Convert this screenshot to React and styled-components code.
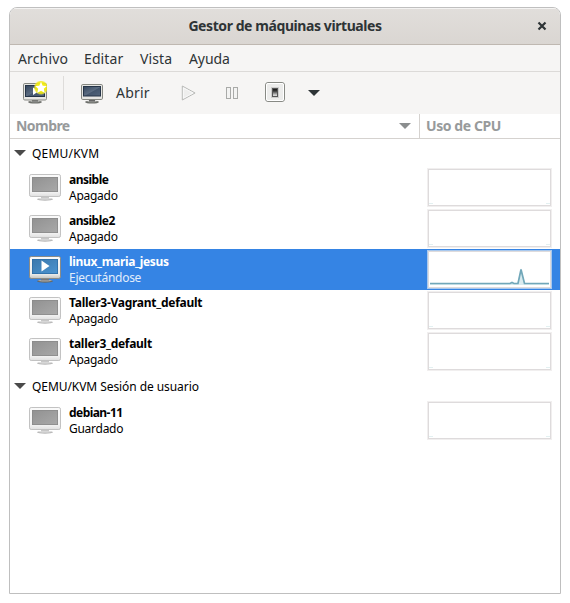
import React from "react";
import styled, { createGlobalStyle } from "styled-components";

const Global = createGlobalStyle`
  * { box-sizing: border-box; }
  body { margin: 0; background: #fff; }
`;

const Page = styled.div`
  height: 603px;
  padding: 7px 9px 9px;
  overflow: hidden;
  font-family: "Noto Sans", "Open Sans", sans-serif;
  color: #2e3436;
  white-space: nowrap;
`;

const Window = styled.div`
  width: 552px;
  height: 587px;
  display: flex;
  flex-direction: column;
  border: 1px solid #bfbfbf;
  border-radius: 8px 8px 0 0;
  background: #fff;
  overflow: hidden;
`;

const TitleBar = styled.header`
  height: 37px;
  flex: none;
  display: grid;
  grid-template-columns: 36px 1fr 36px;
  align-items: center;
  border-bottom: 1px solid #bfb8b1;
  background: linear-gradient(#e1dedb, #dad6d2);
  box-shadow: inset 0 1px #f4f3f2;
`;

const Title = styled.h1`
  grid-column: 2;
  margin: 0;
  text-align: center;
  font-size: 14px;
  line-height: 20px;
  font-weight: 700;
  letter-spacing: -0.42px;
`;

const CloseButton = styled.button`
  padding: 0;
  border: 0;
  background: none;
  height: 36px;
  display: flex;
  align-items: center;
  justify-content: center;
`;

const MenuBar = styled.nav`
  height: 27px;
  flex: none;
  display: flex;
  align-items: center;
  padding: 2px 0 0 8px;
  background: #f6f5f4;
  border-bottom: 1px solid #dcdad8;
`;

const MenuItem = styled.span`
  width: ${(p) => p.$width}px;
  font-size: 14px;
  line-height: 20px;
  letter-spacing: ${(p) => p.$track || 0}px;
`;

const Toolbar = styled.div`
  height: 42px;
  flex: none;
  display: flex;
  align-items: center;
  background: #f6f5f4;
`;

const Tool = styled.div`
  height: 42px;
  width: ${(p) => p.$width}px;
  display: flex;
  align-items: center;
  padding-left: ${(p) => p.$inset || 0}px;
  padding-bottom: ${(p) => p.$lift || 0}px;
  svg { flex: none; }
`;

const ToolLabel = styled.span`
  margin-left: 12px;
  font-size: 14px;
  line-height: 20px;
  letter-spacing: 0.2px;
`;

const Separator = styled.div`
  width: 1px;
  height: 34px;
  background: #dedcda;
`;

const ColumnHeads = styled.div`
  height: 25px;
  flex: none;
  display: grid;
  grid-template-columns: 410px 1fr;
  border-bottom: 1px solid #d5d2cf;
`;

const ColumnHead = styled.div`
  display: flex;
  align-items: center;
  justify-content: space-between;
  padding: 0 8px 0 6px;
  border-right: ${(p) => (p.$divided ? "1px solid #d5d2cf" : "0")};
  color: #979a9b;
  font-size: 14px;
  line-height: 20px;
  font-weight: 700;
  letter-spacing: ${(p) => p.$track || 0}px;
`;

const GroupRow = styled.div`
  height: 28px;
  flex: none;
  display: flex;
  align-items: center;
  padding: 2px 0 0 4px;
  gap: 6px;
  color: #000;
  font-size: 12px;
  line-height: 16px;
  letter-spacing: ${(p) => p.$track || 0}px;
  svg { margin-bottom: 2px; }
`;

const MachineRow = styled.div`
  height: 41px;
  flex: none;
  display: grid;
  grid-template-columns: 59px 1fr 133px;
  color: ${(p) => (p.$selected ? "#fff" : "#000")};
  background: ${(p) => (p.$selected ? "#3584e4" : "#fff")};
`;

const IconCell = styled.div`
  padding: 4px 0 0 19px;
  svg { display: block; }
`;

const Details = styled.div`
  padding-top: 5px;
  font-size: 12px;
  line-height: 16px;
`;

const MachineName = styled.div`
  font-weight: 700;
  letter-spacing: ${(p) => p.$track || 0}px;
`;

const MachineState = styled.div`
  letter-spacing: -0.27px;
  color: ${(p) => (p.$selected ? "#e1edfb" : "#000")};
`;

const Graph = styled.div`
  margin: 1px 0 0;
  width: 125px;
  height: 39px;
  padding: 1px;
  border: 1px solid ${(p) => (p.$selected ? "#a8c8ee" : "#f1efef")};
  background: #fff;
  box-shadow: inset 0 0 0 1px #dedbdc;
  svg { display: block; }
`;

function Arrow({ color = "#4a4a4a" }) {
  return (
    <svg width="12" height="6" viewBox="0 0 12 6">
      <path d="M0 0H12L6 6Z" fill={color} />
    </svg>
  );
}

function Monitor({ running }) {
  const id = running ? "on" : "off";
  return (
    <svg width="32" height="32" viewBox="0 0 32 32">
      <defs>
        <linearGradient id={`case-${id}`} x1="0" y1="0" x2="0" y2="1">
          <stop offset="0" stopColor="#fafafa" />
          <stop offset="0.8" stopColor={running ? "#ececea" : "#f2f2f2"} />
          <stop offset="1" stopColor={running ? "#c4c4c0" : "#dfdfdf"} />
        </linearGradient>
        <linearGradient id={`glass-${id}`} x1="0" y1="0" x2="1" y2="1">
          <stop offset="0" stopColor={running ? "#3b78ad" : "#929292"} />
          <stop offset="1" stopColor={running ? "#4b93cf" : "#a8a8a8"} />
        </linearGradient>
      </defs>
      <ellipse cx="16" cy="28.2" rx="8" ry="1.5" fill={running ? "#686a66" : "#b8b8b8"} />
      <ellipse cx="16" cy="27.6" rx="7" ry="0.9" fill={running ? "#aaa" : "#e2e2e2"} />
      <path d="M12 25.5H20V27.4H12Z" fill={running ? "#777" : "#c7c7c7"} />
      <rect x="0.5" y="3.5" width="31" height="22" rx="1.7" fill={`url(#case-${id})`} stroke={running ? "#8a8b87" : "#c2c2c2"} />
      <rect x="3" y="6" width="26" height="15" fill={running ? "#2e6da5" : "#8a8a8a"} />
      <rect x="3.8" y="6.8" width="24.4" height="13.4" fill={`url(#glass-${id})`} />
      {running && <path d="M12.5 7.5V18.5L20.5 13Z" fill="#fff" />}
    </svg>
  );
}

function SmallMonitor({ starred }) {
  return (
    <svg width="24" height="24" viewBox="0 0 24 24">
      <defs>
        <linearGradient id={starred ? "sg1" : "sg2"} x1="0" y1="0" x2="1" y2="1">
          <stop offset="0" stopColor="#34455c" />
          <stop offset="0.5" stopColor="#5b6c81" />
          <stop offset="0.55" stopColor="#44566d" />
          <stop offset="1" stopColor="#52647b" />
        </linearGradient>
        <radialGradient id="glow">
          <stop offset="0.5" stopColor="#f4ee10" />
          <stop offset="0.8" stopColor="#efe812" stopOpacity="0.85" />
          <stop offset="1" stopColor="#f5f078" stopOpacity="0" />
        </radialGradient>
      </defs>
      <ellipse cx="12" cy="21.1" rx="7" ry="1.5" fill="#6c6e6a" />
      <ellipse cx="12" cy="20.5" rx="5" ry="0.8" fill="#a8aaa6" />
      <rect x="9" y="18.5" width="6" height="2" fill="#666" />
      <rect x={starred ? 0.5 : 1.5} y={starred ? 2.5 : 3.5} width={starred ? 23 : 21} height={starred ? 16.5 : 15} rx="1.3" fill="#e6e6e3" stroke="#858781" />
      <rect x={starred ? 2.5 : 3.5} y={starred ? 4.5 : 5.5} width={starred ? 19 : 17} height={starred ? 11 : 9.5} fill={`url(#${starred ? "sg1" : "sg2"})`} stroke="#263548" />
      {starred && (
        <>
          <path d="M10 6.5V14L16 10Z" fill="#fff" />
          <circle cx="18" cy="6.6" r="7.5" fill="url(#glow)" />
          <path d="M18 .8L19.7 4.7L23.8 5L20.8 7.8L21.8 12L18 9.8L14.2 12L15.2 7.8L12.2 5L16.3 4.7Z" fill="#fff" />
        </>
      )}
    </svg>
  );
}

function PlayIcon() {
  return (
    <svg width="16" height="18" viewBox="0 0 16 18">
      <path d="M2.3 2L15.1 9L2.3 16Z" fill="#eeeeed" stroke="#b8b9b7" strokeLinejoin="round" />
      <path d="M3.4 3.8L13 9L3.4 14.2Z" fill="none" stroke="#fafafa" strokeWidth=".8" />
    </svg>
  );
}

function PauseIcon() {
  return (
    <svg width="14" height="14" viewBox="0 0 14 14" fill="#f3f3f2" stroke="#a9aaa8">
      <rect x="1.5" y="1.5" width="4" height="11" />
      <rect x="8.5" y="1.5" width="4" height="11" />
    </svg>
  );
}

function PowerIcon() {
  return (
    <svg width="20" height="20" viewBox="0 0 20 20">
      <defs>
        <linearGradient id="rocker" x1="0" y1="0" x2="0" y2="1">
          <stop offset="0" stopColor="#111" />
          <stop offset="0.3" stopColor="#333" />
          <stop offset="0.75" stopColor="#bbb" />
          <stop offset="1" stopColor="#eee" />
        </linearGradient>
      </defs>
      <rect x="0.5" y="0.5" width="19" height="19" rx="2.5" fill="#ececeb" stroke="#888a85" />
      <rect x="1.5" y="1.5" width="17" height="17" rx="1.5" fill="none" stroke="#fff" />
      <rect x="6.5" y="5.5" width="7" height="10" fill="#fff" stroke="#ccc" />
      <rect x="7.5" y="6.5" width="5" height="8" fill="url(#rocker)" stroke="#555" />
    </svg>
  );
}

function CpuGraph({ active }) {
  return (
    <svg width="121" height="35" viewBox="0 0 121 35">
      {active ? (
        <>
          <path d="M1 31H81L83 30L85 31H88.5L92 16L95.5 31H120V33H1Z" fill="#d9ebef" />
          <path d="M1 31.5H81L83 30.5L85 31.5H89L92 17.5L95.5 31.5H120" fill="none" stroke="#71a7b9" strokeWidth="1.7" />
        </>
      ) : (
        <path d="M0 33.5H4M117 33.5H121" stroke="#e3f0f1" />
      )}
    </svg>
  );
}

function Machine({ name, state, track, selected }) {
  return (
    <MachineRow $selected={selected}>
      <IconCell><Monitor running={selected} /></IconCell>
      <Details>
        <MachineName $track={track}>{name}</MachineName>
        <MachineState $selected={selected}>{state}</MachineState>
      </Details>
      <Graph $selected={selected}><CpuGraph active={selected} /></Graph>
    </MachineRow>
  );
}

export default function App() {
  return (
    <Page>
      <Global />
      <Window>
        <TitleBar>
          <Title>Gestor de máquinas virtuales</Title>
          <CloseButton aria-label="Cerrar">
            <svg width="10" height="10" viewBox="0 0 10 10">
              <path d="M1.5 1.5L8.5 8.5M8.5 1.5L1.5 8.5" stroke="#2e3436" strokeWidth="2.2" />
            </svg>
          </CloseButton>
        </TitleBar>
        <MenuBar>
          <MenuItem $width={66} $track={0.15}>Archivo</MenuItem>
          <MenuItem $width={56} $track={0.1}>Editar</MenuItem>
          <MenuItem $width={49} $track={0.1}>Vista</MenuItem>
          <MenuItem $width={50} $track={-0.1}>Ayuda</MenuItem>
        </MenuBar>
        <Toolbar>
          <Tool $width={53} $inset={13}><SmallMonitor starred /></Tool>
          <Separator />
          <Tool $width={116} $inset={16}>
            <SmallMonitor />
            <ToolLabel>Abrir</ToolLabel>
          </Tool>
          <Tool $width={45}><PlayIcon /></Tool>
          <Tool $width={40}><PauseIcon /></Tool>
          <Tool $width={43} $lift={2}><PowerIcon /></Tool>
          <Tool $width={12}><Arrow color="#2e3436" /></Tool>
        </Toolbar>
        <ColumnHeads>
          <ColumnHead $divided $track={-0.55}>Nombre<Arrow color="#8b8e8f" /></ColumnHead>
          <ColumnHead $track={-0.42}>Uso de CPU</ColumnHead>
        </ColumnHeads>
        <GroupRow $track={0.2}><Arrow />QEMU/KVM</GroupRow>
        <Machine name="ansible" state="Apagado" track={-0.5} />
        <Machine name="ansible2" state="Apagado" track={-0.5} />
        <Machine name="linux_maria_jesus" state="Ejecutándose" track={-0.33} selected />
        <Machine name="Taller3-Vagrant_default" state="Apagado" track={-0.26} />
        <Machine name="taller3_default" state="Apagado" track={-0.28} />
        <GroupRow $track={-0.07}><Arrow />QEMU/KVM Sesión de usuario</GroupRow>
        <Machine name="debian-11" state="Guardado" track={-0.55} />
      </Window>
    </Page>
  );
}
